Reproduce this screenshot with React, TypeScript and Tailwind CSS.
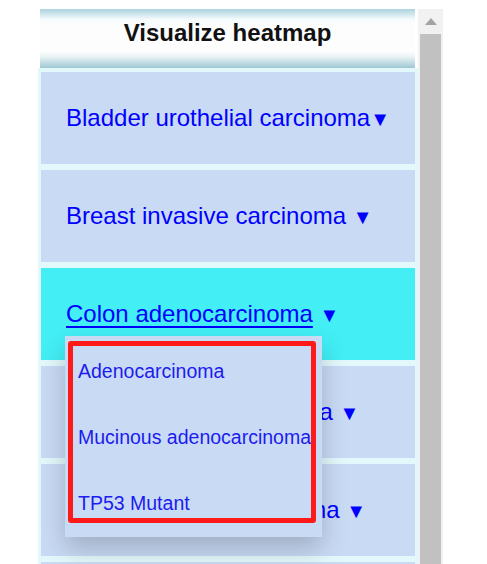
const rows = [
  { label: "Bladder urothelial carcinoma", gap: false },
  { label: "Breast invasive carcinoma", gap: true },
  { label: "Colon adenocarcinoma", gap: true, active: true },
  { label: "Rectum adenocarcinoma", gap: true },
  { label: "Prostate adenocarcinoma", gap: true },
  { label: "Stomach adenocarcinoma", gap: true },
];

const subtypes = ["Adenocarcinoma", "Mucinous adenocarcinoma", "TP53 Mutant"];

function Dropdown() {
  return (
    <div className="absolute left-[24px] top-[68px] z-10 h-[201px] w-[257px] bg-[#c9daf5] pl-[3px] pt-[5px] shadow-[0_12px_24px_0_rgba(0,0,0,0.2)]">
      <div className="flex h-[182px] w-[248px] flex-col overflow-hidden rounded-[3px] border-[5px] border-[#ff1a1a] pl-[5px]">
        {subtypes.map((s, i) => (
          <div
            key={s}
            className={`whitespace-nowrap pt-[14px] text-[19.5px] leading-[22px] text-[#1c1cf0] ${
              i === 2 ? "h-[40px]" : "h-[66px]"
            }`}
          >
            {s}
          </div>
        ))}
      </div>
    </div>
  );
}

export default function App() {
  return (
    <div className="flex h-[564px] overflow-hidden bg-white pl-[38px] pt-[9px] font-['Liberation_Sans',Arial,sans-serif]">
      {/* Panel */}
      <div className="flex w-[380px] flex-col">
        <div className="ml-[2px] mr-[3px] flex h-[59px] shrink-0 justify-center bg-[linear-gradient(to_bottom,#abd3df_0%,#f6fbfc_18%,#fdfdfd_30%,#fdfdfd_72%,#e6f1f4_82%,#9ec7d4_100%)] pt-[10px]">
          <span className="text-[24px] font-bold leading-[28px] text-[#111]">Visualize heatmap</span>
        </div>
        <div className="flex flex-1 flex-col gap-[6px] bg-[#e2f8fb] pl-[3px] pr-[3px] pt-[4px]">
          {rows.map((r) => (
            <div
              key={r.label}
              className={`relative flex h-[92px] shrink-0 items-center pl-[25px] text-[24px] leading-[28px] text-[#0000ff] ${
                r.active ? "bg-[#43eef5]" : "bg-[#c9daf5]"
              }`}
            >
              <span className="whitespace-nowrap">
                <span className={r.active ? "underline decoration-[2px] underline-offset-[4px]" : ""}>{r.label}</span>
                {r.gap ? " " : ""}
                <span className="text-[20px]">▼</span>
              </span>
              {r.active && <Dropdown />}
            </div>
          ))}
        </div>
      </div>
      {/* Scrollbar */}
      <div className="flex w-[25px] flex-col bg-[#f1f1f1]">
        <div className="flex h-[25px] shrink-0 items-center justify-center">
          <svg width="12" height="7" viewBox="0 0 12 7">
            <polygon points="6,0 12,7 0,7" fill="#a3a3a3" />
          </svg>
        </div>
        <div className="ml-[2px] w-[21px] flex-1 bg-[#c1c1c1]" />
      </div>
    </div>
  );
}
